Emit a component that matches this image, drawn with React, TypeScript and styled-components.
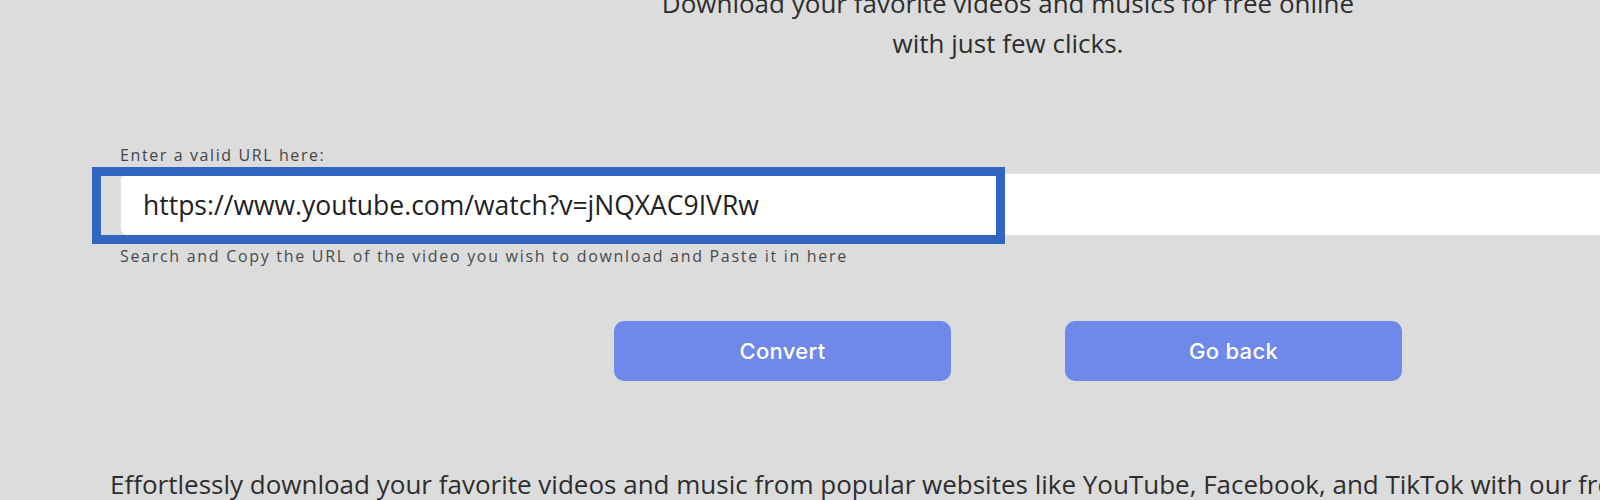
import React from 'react';
import styled, { createGlobalStyle } from 'styled-components';

const GlobalStyle = createGlobalStyle`
  html, body {
    margin: 0;
    padding: 0;
    background: #dcdcdc;
    overflow: hidden;
  }
`;

const Page = styled.div`
  width: 2016px;
  min-height: 500px;
  background: #dcdcdc;
  font-family: 'Open Sans', 'Noto Sans', sans-serif;
  color: #2b2b2b;
`;

const Tagline = styled.p`
  margin: -17px 0 0;
  text-align: center;
  font-size: 26px;
  line-height: 40px;
  color: #2e2e2e;
`;

const Form = styled.div`
  padding: 0 120px;
  margin-top: 82px;
`;

const Label = styled.label`
  display: block;
  font-family: 'Open Sans', 'Noto Sans', sans-serif;
  font-size: 16px;
  letter-spacing: 1.6px;
  line-height: 20px;
  color: #454545;
  margin-bottom: 8px;
`;

const InputWrap = styled.div`
  position: relative;
`;

const UrlInput = styled.input`
  box-sizing: border-box;
  width: 100%;
  height: 63px;
  padding: 0 22px;
  border: 1px solid #e4e4e8;
  border-radius: 8px;
  background: #fff;
  font-family: 'Open Sans', 'Noto Sans', sans-serif;
  font-size: 26.5px;
  color: #222;
  outline: none;
`;

// blue annotation frame drawn over the URL field
const Highlight = styled.div`
  position: absolute;
  left: -28px;
  top: -6px;
  width: 913px;
  height: 77px;
  box-sizing: border-box;
  border: 9px solid #3066bf;
  pointer-events: none;
`;

const Helper = styled.div`
  margin-top: 10px;
  font-family: 'Open Sans', 'Noto Sans', sans-serif;
  font-size: 16px;
  letter-spacing: 1.7px;
  line-height: 20px;
  color: #4a4a4a;
`;

const ButtonRow = styled.div`
  display: flex;
  justify-content: center;
  gap: 114px;
  margin-top: 55px;
`;

const Button = styled.button`
  width: 337px;
  height: 60px;
  border: none;
  border-radius: 10px;
  background: #6e89ea;
  color: #fff;
  font-family: 'Inter', 'Noto Sans', sans-serif;
  font-size: 22px;
  letter-spacing: 0.3px;
  font-weight: 500;
  cursor: pointer;
`;

const Description = styled.p`
  margin: 87px 0 0;
  padding-left: 110px;
  white-space: nowrap;
  font-size: 26px;
  line-height: 32px;
  color: #2e2e2e;
`;

export default function App() {
  return (
    <Page>
      <GlobalStyle />
      <Tagline>
        Download your favorite videos and musics for free online
        <br />
        with just few clicks.
      </Tagline>
      <Form>
        <Label htmlFor="url">Enter a valid URL here:</Label>
        <InputWrap>
          <UrlInput id="url" defaultValue="https://www.youtube.com/watch?v=jNQXAC9IVRw" />
          <Highlight />
        </InputWrap>
        <Helper>Search and Copy the URL of the video you wish to download and Paste it in here</Helper>
      </Form>
      <ButtonRow>
        <Button>Convert</Button>
        <Button>Go back</Button>
      </ButtonRow>
      <Description>
        Effortlessly download your favorite videos and music from popular websites like YouTube, Facebook, and TikTok with our free online video downloader.
      </Description>
    </Page>
  );
}
